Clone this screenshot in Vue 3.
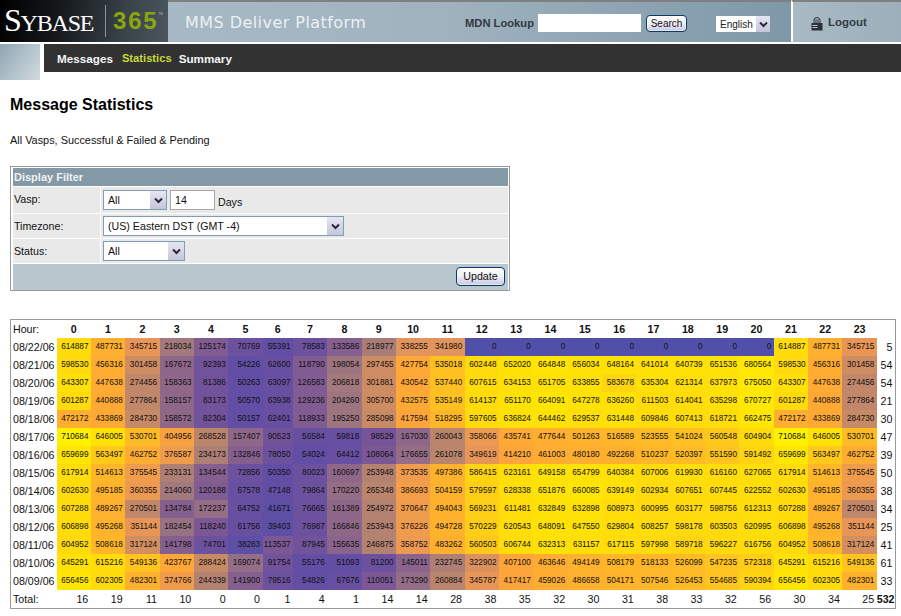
<script setup>
const hours = Array.from({ length: 24 }, (_, i) => i)

const rows = [
  ['08/22/06', [614887,487731,345715,218034,125174,70769,55391,78583,133586,218977,338255,341980,0,0,0,0,0,0,0,0,0,614887,487731,345715], 5],
  ['08/21/06', [598530,456316,301458,167672,92393,54226,62600,118790,198054,297455,427754,535018,602448,652020,664848,656034,648164,641014,640739,651536,680564,598530,456316,301458], 54],
  ['08/20/06', [643307,447638,274456,158363,81386,50263,63097,126583,206818,301881,430542,537440,607615,634153,651705,633855,583678,635304,621314,637973,675050,643307,447638,274456], 54],
  ['08/19/06', [601287,440888,277864,158157,83173,50570,63938,129236,204260,305700,432575,535149,614137,651170,664091,647278,636260,611503,614041,635298,670727,601287,440888,277864], 21],
  ['08/18/06', [472172,433869,284730,158572,82304,50157,62401,118933,195250,285098,417594,518295,597605,636824,644462,629537,631448,609846,607413,618721,662475,472172,433869,284730], 30],
  ['08/17/06', [710684,646005,530701,404956,268528,157407,90523,56584,59818,98529,167030,260043,358066,435741,477644,501263,516589,523555,541024,560548,604904,710684,646005,530701], 47],
  ['08/16/06', [659699,563497,462752,376587,234173,132846,78050,54024,64412,108064,176655,261078,349619,414210,461003,480180,492268,510237,520397,551590,591492,659699,563497,462752], 39],
  ['08/15/06', [617914,514613,375545,233131,134544,72856,50350,80023,160697,253948,373535,497386,586415,623161,649158,654799,640384,607006,619930,616160,627065,617914,514613,375545], 50],
  ['08/14/06', [602630,495185,360355,214060,120188,67578,47148,79864,170220,265348,386693,504159,579597,628338,651876,660085,639149,602934,607651,607445,622552,602630,495185,360355], 38],
  ['08/13/06', [607288,489267,270501,134784,172237,64752,41671,76665,161389,254972,370647,494043,569231,611481,632849,632898,608973,600995,603177,598756,612313,607288,489267,270501], 34],
  ['08/12/06', [606898,495268,351144,182454,118240,61756,39403,76987,166846,253943,376226,494728,570229,620543,648091,647550,629804,608257,598178,603503,620995,606898,495268,351144], 25],
  ['08/11/06', [604952,508618,317124,141798,74701,38283,113537,87945,155635,246875,358752,483262,560503,606744,632313,631157,617115,597998,589718,596227,616756,604952,508618,317124], 41],
  ['08/10/06', [645291,615216,549136,423767,288424,169074,91754,55176,51093,81200,145011,232745,322902,407100,463646,494149,508179,518133,526099,547235,572318,645291,615216,549136], 61],
  ['08/09/06', [656456,602305,482301,374766,244339,141900,79516,54826,67676,110051,173290,260884,345787,417417,459026,486658,504171,507546,526453,554685,590394,656456,602305,482301], 33],
]
const totals = [16,19,11,10,0,0,1,4,1,14,14,28,38,35,32,30,31,38,33,32,56,30,34,25]

const stops = [
  [0, 80, 80, 170],
  [50000, 98, 78, 165],
  [100000, 118, 84, 152],
  [150000, 138, 100, 140],
  [220000, 165, 124, 122],
  [280000, 195, 136, 104],
  [350000, 232, 150, 88],
  [420000, 255, 166, 56],
  [500000, 255, 178, 44],
  [560000, 255, 200, 28],
  [600000, 255, 218, 12],
  [660000, 255, 228, 4],
  [710000, 255, 240, 0],
]

function heat(v) {
  const q = Math.round(v / 12500) * 12500
  let i = 0
  while (i < stops.length - 2 && q > stops[i + 1][0]) i++
  const a = stops[i]
  const b = stops[i + 1]
  const t = Math.min(1, (q - a[0]) / (b[0] - a[0]))
  const c = [1, 2, 3].map((k) => Math.round(a[k] + (b[k] - a[k]) * t))
  return `rgb(${c[0]},${c[1]},${c[2]})`
}
</script>

<template>
  <div class="page">
    <header class="top">
      <div class="logo">
        <span class="sybase"><span class="big">S</span>YBASE</span>
        <span class="rule"></span>
        <span class="n365">365</span><span class="tm">TM</span>
      </div>
      <div class="band">
        <div class="platform">MMS Deliver Platform</div>
        <div class="lookup">
          <span class="lookup-label">MDN Lookup</span>
          <span class="lookup-input"></span>
          <button class="btn search">Search</button>
          <span class="lang">
            <span class="lang-text">English</span>
            <span class="arrow small">
              <svg width="9" height="7" viewBox="0 0 9 7"><path d="M1 1.5 4.5 5 8 1.5" fill="none" stroke="#2a2a3a" stroke-width="2"/></svg>
            </span>
          </span>
        </div>
      </div>
      <div class="logout">
        <svg class="lock" width="12" height="14" viewBox="0 0 12 14">
          <path d="M3 6V3a3 2.4 0 0 1 6 0v3M5 6V2.4M7 6V2.4" fill="none" stroke="#2c3038" stroke-width="1"/>
          <rect x="0.5" y="6" width="11" height="7.5" fill="#2c3038"/>
          <rect x="1.5" y="8" width="5" height="1" fill="#b5c2ca"/>
          <rect x="1.5" y="10" width="5" height="1" fill="#b5c2ca"/>
        </svg>
        <span>Logout</span>
      </div>
    </header>

    <nav class="navrow">
      <div class="tile"></div>
      <div class="navbar">
        <a class="link">Messages</a>
        <a class="link active">Statistics</a>
        <a class="link">Summary</a>
      </div>
    </nav>

    <main class="content">
      <h1>Message Statistics</h1>
      <p class="sub">All Vasps, Successful &amp; Failed &amp; Pending</p>

      <section class="filter">
        <div class="filter-title">Display Filter</div>
        <div class="frow">
          <div class="flabel">Vasp:</div>
          <div class="ffield">
            <div class="select vasp">
              <span class="select-text">All</span>
              <span class="arrow"><svg width="9" height="7" viewBox="0 0 9 7"><path d="M1 1.5 4.5 5 8 1.5" fill="none" stroke="#2a2a3a" stroke-width="2"/></svg></span>
            </div>
            <div class="days-input">14</div>
            <span class="days">Days</span>
          </div>
        </div>
        <div class="frow short">
          <div class="flabel">Timezone:</div>
          <div class="ffield">
            <div class="select tz">
              <span class="select-text">(US) Eastern DST (GMT -4)</span>
              <span class="arrow"><svg width="9" height="7" viewBox="0 0 9 7"><path d="M1 1.5 4.5 5 8 1.5" fill="none" stroke="#2a2a3a" stroke-width="2"/></svg></span>
            </div>
          </div>
        </div>
        <div class="frow short">
          <div class="flabel">Status:</div>
          <div class="ffield">
            <div class="select status">
              <span class="select-text">All</span>
              <span class="arrow"><svg width="9" height="7" viewBox="0 0 9 7"><path d="M1 1.5 4.5 5 8 1.5" fill="none" stroke="#2a2a3a" stroke-width="2"/></svg></span>
            </div>
          </div>
        </div>
        <div class="ffoot"><button class="btn update">Update</button></div>
      </section>

      <table class="heat">
        <colgroup>
          <col class="c-date" />
          <col v-for="h in hours" :key="h" :class="h === 6 ? 'c-narrow' : 'c-hour'" />
          <col class="c-total" />
        </colgroup>
        <thead>
          <tr>
            <th class="date hourlabel">Hour:</th>
            <th v-for="h in hours" :key="h" class="hour">{{ h }}</th>
            <th></th>
          </tr>
        </thead>
        <tbody>
          <tr v-for="r in rows" :key="r[0]">
            <td class="date">{{ r[0] }}</td>
            <td v-for="(v, i) in r[1]" :key="i" class="cell" :style="{ background: heat(v) }">{{ v }}</td>
            <td class="rowtotal">{{ r[2] }}</td>
          </tr>
          <tr>
            <td class="date">Total:</td>
            <td v-for="(t, i) in totals" :key="i" class="coltotal">{{ t }}</td>
            <td class="rowtotal grand">532</td>
          </tr>
        </tbody>
      </table>
    </main>
  </div>
</template>

<style>
html, body { margin: 0; background: #fff; }
</style>

<style scoped>
.page {
  width: 901px;
  height: 616px;
  overflow: hidden;
  font-family: "Liberation Sans", Arial, sans-serif;
  color: #111;
  background: #fff;
}
.top {
  display: flex;
  height: 42px;
}
.logo {
  width: 168px;
  flex: none;
  display: flex;
  align-items: center;
  box-sizing: border-box;
  padding-left: 4px;
  background: linear-gradient(100deg, #000 0%, #15181b 35%, #3a444b 75%, #4b565e 100%);
  color: #fff;
}
.sybase {
  font-family: "Liberation Serif", serif;
  font-size: 24px;
  line-height: 30px;
  letter-spacing: -1.2px;
  width: 101px;
  flex: none;
}
.big { font-size: 32px; }
.rule {
  width: 1px;
  height: 32px;
  background: #8c949a;
  margin-right: 7px;
  flex: none;
}
.n365 {
  font-family: "Liberation Sans", sans-serif;
  font-weight: 700;
  font-size: 24px;
  letter-spacing: 1.8px;
  color: #8aa60c;
}
.tm {
  font-size: 3px;
  color: #bbb;
  align-self: flex-start;
  margin-top: 12px;
}
.band {
  flex: 1;
  display: flex;
  box-sizing: border-box;
  border-top: 2px solid #7f7f7f;
  background: linear-gradient(90deg, #a7b9c5 0%, #9fb2be 45%, #8aa1b0 80%, #7f98a8 100%);
}
.platform {
  font-family: "DejaVu Sans", sans-serif;
  font-size: 16px;
  letter-spacing: 0.45px;
  white-space: nowrap;
  color: #eaf0f3;
  margin: 12px 0 0 17px;
  line-height: 18px;
  width: 280px;
  flex: none;
}
.lookup {
  display: flex;
  align-items: flex-start;
}
.lookup-label {
  font-weight: 700;
  font-size: 11.2px;
  color: #33383f;
  margin-top: 15px;
  width: 73px;
  flex: none;
  white-space: nowrap;
}
.lookup-input {
  width: 103px;
  height: 18px;
  background: #fff;
  margin-top: 12px;
  flex: none;
}
.btn {
  font-family: "Liberation Sans", sans-serif;
  padding: 0;
  border: 1px solid #0c3a6b;
  border-radius: 4px;
  background: linear-gradient(180deg, #fff 0%, #f1f1f7 45%, #c9c9e0 100%);
  color: #111;
  box-shadow: inset 0 0 0 1px rgba(255, 255, 255, 0.5);
}
.search {
  width: 41px;
  height: 17px;
  font-size: 10px;
  margin: 13px 0 0 5px;
  line-height: 13px;
}
.lang {
  display: flex;
  margin: 14px 0 0 29px;
}
.lang-text {
  width: 39px;
  height: 16px;
  background: #fff;
  font-size: 10px;
  line-height: 17px;
  padding-left: 4px;
  box-sizing: border-box;
  color: #222;
}
.arrow {
  display: flex;
  align-items: center;
  justify-content: center;
  flex: none;
  width: 17px;
  background: linear-gradient(180deg, #e6e6f2, #c5c5dc);
  border-left: 1px solid #fff;
  box-sizing: border-box;
}
.arrow.small { width: 15px; height: 16px; }
.logout {
  width: 110px;
  flex: none;
  box-sizing: border-box;
  border-top: 2px solid #7f7f7f;
  border-left: 2px solid #fff;
  background: linear-gradient(90deg, #a9bac4, #9cafba);
  display: flex;
  align-items: flex-start;
  padding: 13px 0 0 18px;
  gap: 5px;
  font-weight: 700;
  font-size: 11.5px;
  color: #333c48;
  line-height: 14px;
}
.lock { margin-top: 2px; }
.navrow {
  display: flex;
  align-items: flex-start;
  margin-top: 2px;
  height: 36px;
}
.tile {
  width: 40px;
  height: 36px;
  flex: none;
  background: linear-gradient(125deg, #8ea5b3 0%, #b4c4cc 55%, #d2dade 100%);
}
.navbar {
  flex: 1;
  margin-left: 4px;
  height: 28px;
  background: #323232;
  display: flex;
  align-items: center;
  padding-left: 13px;
  gap: 7px;
  font-size: 11.7px;
  font-weight: 700;
  color: #f2f4f6;
}
.link.active {
  color: #c6d83a;
  font-size: 11.2px;
  margin-left: 2px;
}
.content { padding: 0 0 0 10px; }
h1 {
  margin: 15px 0 0;
  font-size: 16px;
  line-height: 20px;
  font-weight: 700;
  color: #000;
}
.sub {
  margin: 18px 0 0;
  font-size: 10.9px;
  line-height: 14px;
  color: #111;
}
.filter {
  width: 500px;
  height: 125px;
  box-sizing: border-box;
  margin-top: 19px;
  border: 1px solid #999;
  padding: 1px 1px 0 2px;
  font-size: 10.67px;
  overflow: hidden;
}
.filter-title {
  height: 18px;
  background: #8499a6;
  color: #eef2f4;
  font-weight: 700;
  font-size: 11px;
  line-height: 18px;
  padding-left: 1px;
  margin-bottom: 1px;
}
.frow {
  display: flex;
  height: 26px;
  margin-bottom: 1px;
}
.frow.short { height: 24px; }
.flabel {
  width: 87px;
  flex: none;
  background: #e9e9e9;
  line-height: 25px;
  padding-left: 1px;
  box-sizing: border-box;
  margin-right: 1px;
  font-size: 10.67px;
}
.ffield {
  flex: 1;
  background: #e9e9e9;
  display: flex;
  align-items: center;
  padding-left: 2px;
}
.select {
  display: flex;
  height: 20px;
  box-sizing: border-box;
  border: 1px solid #7f9db9;
  background: #fff;
}
.select-text {
  flex: 1;
  padding-left: 4px;
  line-height: 18px;
  font-size: 10.67px;
}
.vasp { width: 64px; }
.tz { width: 241px; }
.status { width: 82px; }
.days-input {
  width: 45px;
  height: 20px;
  box-sizing: border-box;
  border: 1px solid #a8a8a8;
  background: #fff;
  margin-left: 3px;
  padding-left: 4px;
  line-height: 18px;
}
.days { margin: 3px 0 0 3px; }
.ffoot {
  height: 26px;
  background: #b9c7cf;
  display: flex;
  justify-content: flex-end;
  align-items: flex-start;
  padding: 3px 3px 0 0;
  box-sizing: border-box;
}
.update {
  width: 49px;
  height: 19px;
  font-size: 10.67px;
  line-height: 15px;
}
.heat {
  margin-top: 28px;
  border-collapse: collapse;
  table-layout: fixed;
  width: 886px;
  border: 1px solid #999;
  font-size: 10.67px;
}
.c-date { width: 46px; }
.c-hour { width: 34.33px; }
.c-narrow { width: 30.33px; }
.c-total { width: 18.7px; }
.heat th, .heat td {
  padding: 0;
  height: 18px;
  line-height: 18px;
  white-space: nowrap;
  overflow: hidden;
}
.date {
  text-align: left;
  padding-left: 2px !important;
  font-weight: 400;
  font-size: 10.67px;
}
.hourlabel { font-weight: 400; }
.hour {
  text-align: center;
  font-size: 10.67px;
  font-weight: 700;
}
.cell {
  font-size: 8.2px;
  text-align: right;
  padding-right: 2.4px !important;
  color: #111;
}
.coltotal {
  text-align: right;
  padding-right: 2.6px !important;
}
.rowtotal {
  text-align: right;
  padding-right: 2.6px !important;
}
.grand { font-weight: 700; }
</style>
